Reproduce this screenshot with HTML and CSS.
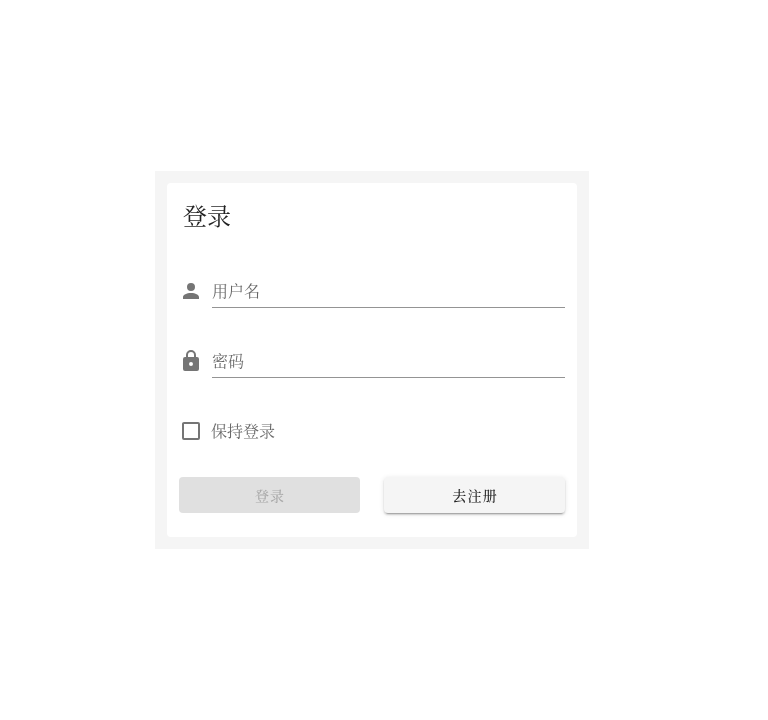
FILE: index.html
```html
<!DOCTYPE html>
<html lang="zh-CN">
<head>
<meta charset="utf-8">
<title>登录</title>
<link rel="stylesheet" href="styles.css">
</head>
<body>
<main class="panel">
  <form class="card">
    <h1 class="title">登录</h1>
    <div class="field">
      <svg class="icon" viewBox="0 0 24 24"><path d="M12 4a4 4 0 0 1 4 4 4 4 0 0 1-4 4 4 4 0 0 1-4-4 4 4 0 0 1 4-4m0 10c4.42 0 8 1.79 8 4v2H4v-2c0-2.21 3.58-4 8-4z"/></svg>
      <div class="input">用户名</div>
    </div>
    <div class="field">
      <svg class="icon" viewBox="0 0 24 24"><path d="M12 17a2 2 0 0 0 2-2 2 2 0 0 0-2-2 2 2 0 0 0-2 2 2 2 0 0 0 2 2m6-9a2 2 0 0 1 2 2v10a2 2 0 0 1-2 2H6a2 2 0 0 1-2-2V10a2 2 0 0 1 2-2h1V6a5 5 0 0 1 5-5 5 5 0 0 1 5 5v2h1m-6-5a3 3 0 0 0-3 3v2h6V6a3 3 0 0 0-3-3z"/></svg>
      <div class="input">密码</div>
    </div>
    <div class="check">
      <svg class="icon" viewBox="0 0 24 24"><path d="M19 3H5c-1.11 0-2 .89-2 2v14a2 2 0 0 0 2 2h14a2 2 0 0 0 2-2V5a2 2 0 0 0-2-2m0 2v14H5V5h14z"/></svg>
      <span class="check-label">保持登录</span>
    </div>
    <div class="actions">
      <button class="btn btn-disabled" type="button" disabled>登录</button>
      <button class="btn btn-raised" type="button">去注册</button>
    </div>
  </form>
</main>
</body>
</html>
```
FILE: styles.css
```css
* { box-sizing: border-box; }
body {
  margin: 0;
  height: 720px;
  padding-top: 171px;
  background: #fff;
  font-family: "Noto Serif CJK SC", serif;
  font-weight: 400;
  color: rgba(0, 0, 0, .87);
}
.panel {
  width: 434px;
  height: 378px;
  margin: 0 0 0 155px;
  padding: 12px;
  background: #f5f5f5;
}
.card {
  height: 354px;
  padding: 16px 12px 24px;
  background: #fff;
  border-radius: 4px;
}
.title, .input, .check-label, .btn { will-change: transform; }
.title {
  margin: 0 4px;
  font-size: 24px;
  font-weight: 400;
  line-height: 32px;
}
.field {
  display: flex;
  align-items: flex-start;
  height: 32px;
  margin-top: 38px;
}
.title + .field { margin-top: 45px; }
.icon {
  width: 24px;
  height: 24px;
  flex: none;
  fill: #757575;
}
.field .icon { margin-top: 3px; }
.input {
  flex: 1;
  height: 32px;
  margin-left: 9px;
  font-size: 16px;
  line-height: 30px;
  color: rgba(0, 0, 0, .6);
  border-bottom: 1px solid #949494;
}
.check {
  display: flex;
  align-items: center;
  height: 24px;
  margin-top: 41px;
}
.check-label {
  margin-left: 8px;
  font-size: 16px;
  line-height: 24px;
  color: rgba(0, 0, 0, .6);
}
.actions {
  display: grid;
  grid-template-columns: 1fr 1fr;
  gap: 24px;
  margin-top: 34px;
}
.btn {
  height: 36px;
  padding: 0;
  border: 0;
  border-radius: 4px;
  font: 500 14px/36px "Noto Serif CJK SC", serif;
  letter-spacing: 1.25px;
  text-indent: 1.25px;
}
.btn-disabled { background: #e0e0e0; color: rgba(0, 0, 0, .26); }
.btn-raised {
  background: #f5f5f5;
  color: rgba(0, 0, 0, .87);
  box-shadow: 0 3px 1px -2px rgba(0,0,0,.2), 0 2px 2px 0 rgba(0,0,0,.14), 0 1px 5px 0 rgba(0,0,0,.12);
}
```
